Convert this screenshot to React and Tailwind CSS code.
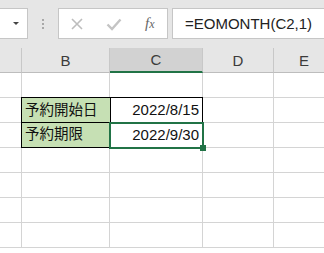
import React from "react";

const grid = "border-[#d4d4d4]";

function HeaderCell({ w, label, selected, last }) {
  return (
    <div
      className={`flex items-center justify-center shrink-0 h-full ${selected ? "bg-[#d2d2d2] border-b-2 border-b-[#217346]" : "border-b border-b-[#bdbdbd]"} ${last ? "" : "border-r border-r-[#c8c8c8]"}`}
      style={{ width: w }}
    >
      <span className="text-[15px] text-[#3b3b3b] leading-none" style={{ fontFamily: '"Liberation Sans", Arial, sans-serif' }}>
        {label}
      </span>
    </div>
  );
}

export default function App() {
  const widths = [22, 88, 93, 71, 60];
  const rows = [0, 1, 2, 3, 4, 5, 6];
  return (
    <div className="w-[324px] h-[253px] overflow-hidden bg-white relative" style={{ fontFamily: '"Liberation Sans", Arial, "Noto Sans CJK JP", sans-serif' }}>
      {/* toolbar */}
      <div className="h-[48px] bg-[#e6e6e6] flex items-start pt-[8px]">
        <div className="ml-[-2px] w-[30px] h-[31px] bg-white border border-[#c6c6c6] flex items-center justify-end pr-[8px]">
          <div className="w-0 h-0 border-l-[3.5px] border-r-[3.5px] border-t-[3.5px] border-l-transparent border-r-transparent border-t-[#444]" />
        </div>
        <div className="w-[30px] h-[31px] flex flex-col items-center justify-center gap-[2px]">
          <div className="w-[2px] h-[2px] bg-[#a8a8a8]" />
          <div className="w-[2px] h-[2px] bg-[#a8a8a8]" />
          <div className="w-[2px] h-[2px] bg-[#a8a8a8]" />
        </div>
        <div className="w-[110px] h-[31px] bg-white border border-[#c6c6c6] flex items-center">
          <svg width="14" height="14" viewBox="0 0 14 14" className="ml-[11px]">
            <path d="M2 2 L12 12 M12 2 L2 12" stroke="#bdbdbd" strokeWidth="1.6" fill="none" />
          </svg>
          <svg width="16" height="14" viewBox="0 0 16 14" className="ml-[22px]">
            <path d="M1.5 7.5 L6 12 L14.5 2.5" stroke="#c4c4c4" strokeWidth="2.4" fill="none" />
          </svg>
          <span className="ml-[23px] text-[15px] italic text-[#666] leading-none" style={{ fontFamily: '"Liberation Serif", "Times New Roman", serif' }}>
            <span className="italic">f</span><span className="text-[12px]">x</span>
          </span>
        </div>
        <div className="ml-[4px] flex-1 h-[31px] bg-white border border-[#c6c6c6] border-r-0 flex items-center pl-[12px]">
          <span className="text-[15px] text-[#222] leading-none">=EOMONTH(C2,1)</span>
        </div>
      </div>

      {/* column headers */}
      <div className="h-[25px] bg-[#e6e6e6] flex">
        <HeaderCell w={22} label="" />
        <HeaderCell w={88} label="B" />
        <HeaderCell w={93} label="C" selected />
        <HeaderCell w={71} label="D" />
        <HeaderCell w={60} label="E" last />
      </div>

      {/* grid */}
      <div className="flex flex-col">
        {rows.map((r) => (
          <div key={r} className="flex h-[25px] shrink-0">
            {widths.map((w, c) => {
              let content = null;
              let cls = `border-r border-b ${grid}`;
              if (r === 1 && c === 1) {
                cls = "bg-[#c6e0b4] border border-black border-r-0 border-b-0 mt-[-1px] ml-[-1px]";
                content = <span className="pl-[3px] text-[14.5px] text-[#111]">予約開始日</span>;
              } else if (r === 2 && c === 1) {
                cls = "bg-[#c6e0b4] border border-black border-r-0 mt-[-1px] ml-[-1px]";
                content = <span className="pl-[3px] text-[14.5px] text-[#111]">予約期限</span>;
              } else if (r === 1 && c === 2) {
                cls = "border border-black border-b-0 mt-[-1px]";
                content = <span className="ml-auto pr-[3px] text-[15px] text-[#111]">2022/8/15</span>;
              } else if (r === 2 && c === 2) {
                cls = "border border-black mt-[-1px]";
                content = <span className="ml-auto pr-[3px] text-[15px] text-[#111]">2022/9/30</span>;
              }
              const extraW = (r === 1 || r === 2) && c === 1 ? w + 1 : w;
              const h = (r === 1 || r === 2) && (c === 1 || c === 2) ? 26 : 25;
              return (
                <div
                  key={c}
                  className={`shrink-0 flex items-center relative ${cls}`}
                  style={{ width: extraW, height: h }}
                >
                  {content}
                  {r === 2 && c === 2 && (
                    <div className="absolute left-[-2px] top-[-1px] right-[-2px] bottom-[-2px] border-2 border-[#217346] z-10">
                      <div className="absolute right-[-4px] bottom-[-4px] w-[6px] h-[6px] bg-[#217346]" />
                    </div>
                  )}
                </div>
              );
            })}
          </div>
        ))}
      </div>
    </div>
  );
}
